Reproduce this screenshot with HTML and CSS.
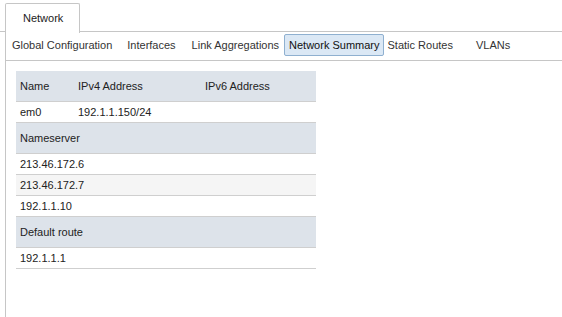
FILE: index.html
```html
<!DOCTYPE html>
<html>
<head>
<meta charset="utf-8">
<link rel="stylesheet" href="styles.css">
</head>
<body>
<div class="tabbar">
  <div class="tab">Network</div>
</div>
<div class="panel">
  <div class="subnav">
    <span class="item i-global">Global Configuration</span>
    <span class="item i-ifaces">Interfaces</span>
    <span class="item i-lagg">Link Aggregations</span>
    <span class="item active">Network Summary</span>
    <span class="item i-static">Static Routes</span>
    <span class="item i-vlan">VLANs</span>
  </div>
  <table class="summary">
    <tr class="head"><td class="c-name">Name</td><td class="c-v4">IPv4 Address</td><td class="c-v6">IPv6 Address</td></tr>
    <tr class="row"><td>em0</td><td>192.1.1.150/24</td><td></td></tr>
    <tr class="head"><td colspan="3">Nameserver</td></tr>
    <tr class="row"><td colspan="3">213.46.172.6</td></tr>
    <tr class="row alt"><td colspan="3">213.46.172.7</td></tr>
    <tr class="row"><td colspan="3">192.1.1.10</td></tr>
    <tr class="head"><td colspan="3">Default route</td></tr>
    <tr class="row"><td colspan="3">192.1.1.1</td></tr>
  </table>
</div>
</body>
</html>
```
FILE: styles.css
```css
html, body {
  margin: 0;
  padding: 0;
  background: #fff;
}
body {
  font-family: "Liberation Sans", Arial, sans-serif;
  font-size: 11px;
  color: #222;
  height: 317px;
  overflow: hidden;
}
.tabbar {
  display: flex;
  padding: 3px 0 0 5px;
  border-bottom: 1px solid #c6c6c6;
  height: 28px;
}
.tab {
  width: 56px;
  height: 29px;
  border: 1px solid #c6c6c6;
  border-bottom: none;
  border-radius: 2px 2px 0 0;
  background: #fff;
  padding-left: 17px;
  line-height: 28px;
  margin-bottom: -1px;
  color: #222;
}
.panel {
  margin-left: 5px;
  border-left: 1px solid #c6c6c6;
  height: 300px;
}
.subnav {
  display: flex;
  align-items: flex-start;
  padding-top: 2px;
  height: 26px;
  border-bottom: 1px solid #c6c6c6;
  color: #333;
}
.item {
  padding: 3px 4px 3px 5px;
  border: 1px solid transparent;
  border-radius: 2px;
  line-height: 14px;
}
.i-global { margin-left: 0; }
.i-ifaces { margin-left: 4px; }
.i-lagg { margin-left: 5px; }
.active {
  margin-left: 0;
  padding: 3px 3px 3px 4px;
  background: #dbe8f5;
  border-color: #8fb0d0;
  color: #111;
}
.i-static { margin-left: -2px; }
.i-vlan { margin-left: 12px; }
.summary {
  margin: 10px 0 0 10px;
  border-collapse: collapse;
  width: 300px;
}
.summary td {
  padding: 0 4px;
  border-bottom: 1px solid #cfcfcf;
  white-space: nowrap;
}
.head td {
  background: #dde3ea;
  height: 30px;
}
.row td {
  height: 20px;
}
.alt td {
  background: #f5f5f5;
}
.c-name { width: 50px; }
.c-v4 { width: 119px; }
```
